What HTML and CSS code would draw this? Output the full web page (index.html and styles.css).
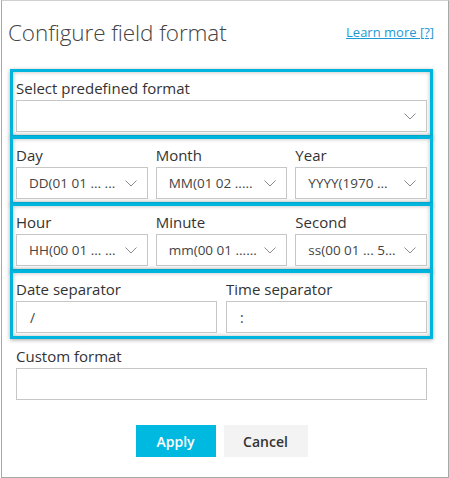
FILE: index.html
```html
<!DOCTYPE html>
<html>
<head>
<meta charset="utf-8">
<link rel="stylesheet" href="styles.css">
</head>
<body>
<div class="dialog">
  <div class="header">
    <h1 class="title">Configure field format</h1>
    <a class="learn" href="#">Learn more [?]</a>
  </div>

  <div class="group">
    <label class="lbl">Select predefined format</label>
    <div class="select"><span class="val"></span><svg class="chev" width="12" height="7" viewBox="0 0 12 7"><path d="M0.5 0.5 L6 6 L11.5 0.5" fill="none" stroke="#8a8a8a" stroke-width="1"/></svg></div>
  </div>

  <div class="group next">
    <div class="cols3">
      <div class="field">
        <label class="lbl">Day</label>
        <div class="select"><span class="val">DD(01 01 ... ...</span><svg class="chev" width="12" height="7" viewBox="0 0 12 7"><path d="M0.5 0.5 L6 6 L11.5 0.5" fill="none" stroke="#8a8a8a" stroke-width="1"/></svg></div>
      </div>
      <div class="field">
        <label class="lbl">Month</label>
        <div class="select"><span class="val">MM(01 02 .....</span><svg class="chev" width="12" height="7" viewBox="0 0 12 7"><path d="M0.5 0.5 L6 6 L11.5 0.5" fill="none" stroke="#8a8a8a" stroke-width="1"/></svg></div>
      </div>
      <div class="field">
        <label class="lbl">Year</label>
        <div class="select"><span class="val">YYYY(1970 ...</span><svg class="chev" width="12" height="7" viewBox="0 0 12 7"><path d="M0.5 0.5 L6 6 L11.5 0.5" fill="none" stroke="#8a8a8a" stroke-width="1"/></svg></div>
      </div>
    </div>
  </div>

  <div class="group next">
    <div class="cols3">
      <div class="field">
        <label class="lbl">Hour</label>
        <div class="select"><span class="val">HH(00 01 ... ...</span><svg class="chev" width="12" height="7" viewBox="0 0 12 7"><path d="M0.5 0.5 L6 6 L11.5 0.5" fill="none" stroke="#8a8a8a" stroke-width="1"/></svg></div>
      </div>
      <div class="field">
        <label class="lbl">Minute</label>
        <div class="select"><span class="val">mm(00 01 ......</span><svg class="chev" width="12" height="7" viewBox="0 0 12 7"><path d="M0.5 0.5 L6 6 L11.5 0.5" fill="none" stroke="#8a8a8a" stroke-width="1"/></svg></div>
      </div>
      <div class="field">
        <label class="lbl">Second</label>
        <div class="select"><span class="val">ss(00 01 ... 5...</span><svg class="chev" width="12" height="7" viewBox="0 0 12 7"><path d="M0.5 0.5 L6 6 L11.5 0.5" fill="none" stroke="#8a8a8a" stroke-width="1"/></svg></div>
      </div>
    </div>
  </div>

  <div class="group next">
    <div class="cols2">
      <div class="field">
        <label class="lbl">Date separator</label>
        <div class="input"><span class="val sep">/</span></div>
      </div>
      <div class="field">
        <label class="lbl">Time separator</label>
        <div class="input"><span class="val sep">:</span></div>
      </div>
    </div>
  </div>

  <div class="custom">
    <label class="lbl">Custom format</label>
    <div class="input"></div>
  </div>

  <div class="actions">
    <button class="btn apply">Apply</button>
    <button class="btn cancel">Cancel</button>
  </div>
</div>
</body>
</html>
```

FILE: styles.css
```css
html, body {
  margin: 0;
  padding: 0;
  background: #ffffff;
}
body {
  font-family: "Open Sans", "Noto Sans", sans-serif;
  color: #333333;
}
.dialog {
  box-sizing: border-box;
  width: 448px;
  height: 478px;
  margin-left: 1px;
  border: 1px solid #a8a8a8;
  border-top-color: #d0d0d0;
  padding: 0 0 0 8px;
}
.header {
  display: flex;
  justify-content: space-between;
  align-items: flex-start;
  padding: 17px 14px 0 0;
  height: 49px;
  box-sizing: border-box;
}
.title {
  margin: 0 0 0 -2px;
  font-size: 22.5px;
  font-weight: 300;
  line-height: 30px;
  color: #444444;
  letter-spacing: -0.1px;
}
.learn {
  font-size: 13px;
  line-height: 18px;
  margin-top: 5px;
  color: #1d9ad6;
  text-decoration: underline;
}
.group {
  box-sizing: border-box;
  width: 423px;
  height: 69px;
  border: 3px solid #00b5dd;
  padding: 6px 3px 3px 3px;
  box-shadow: 0 1px 4px rgba(0, 0, 0, 0.35), inset 0 0 4px rgba(0, 0, 0, 0.28);
  margin-top: 19px;
  position: relative;
  background: #ffffff;
}
.group.next {
  margin-top: -2px;
}
.lbl {
  display: block;
  font-size: 15px;
  line-height: 20px;
  height: 20px;
  margin-bottom: 2px;
  color: #333333;
  white-space: nowrap;
}
.cols3 {
  display: grid;
  grid-template-columns: 1fr 1fr 1fr;
  column-gap: 8px;
}
.cols2 {
  display: grid;
  grid-template-columns: 1fr 1fr;
  column-gap: 9px;
}
.select, .input {
  box-sizing: border-box;
  height: 32px;
  border: 1px solid #c6c6c6;
  background: #ffffff;
  display: flex;
  align-items: center;
  justify-content: space-between;
  padding: 0 9px 0 12px;
}
.val {
  font-size: 13.5px;
  color: #444444;
  white-space: nowrap;
  overflow: hidden;
}
.val.sep {
  padding-left: 1px;
  font-size: 14px;
}
.chev {
  flex: none;
  margin-right: 1px;
}
.custom {
  width: 411px;
  margin: 7px 0 0 6px;
}
.actions {
  width: 411px;
  margin: 25px 0 0 6px;
  display: flex;
  justify-content: center;
  gap: 8px;
}
.btn {
  height: 32px;
  border: none;
  font-family: "Open Sans", "Noto Sans", sans-serif;
  font-size: 14px;
  font-weight: 600;
  padding: 0;
}
.apply {
  width: 80px;
  background: #00b9e1;
  color: #ffffff;
}
.cancel {
  width: 84px;
  background: #f3f3f3;
  color: #333333;
}
```
